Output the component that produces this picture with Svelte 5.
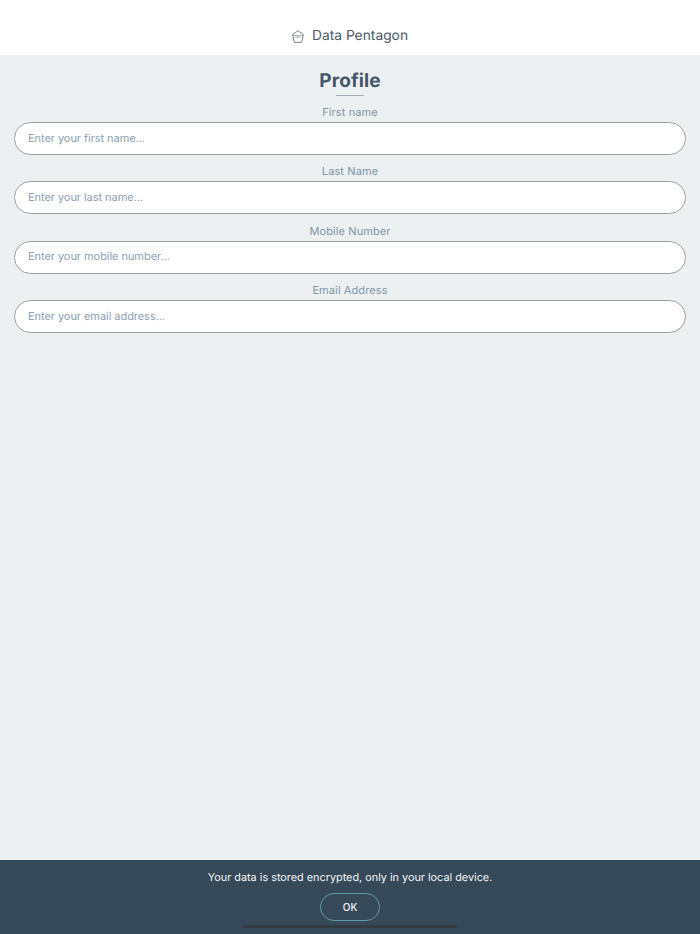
<script lang="ts">
  const fields = [
    { label: "First name", placeholder: "Enter your first name..." },
    { label: "Last Name", placeholder: "Enter your last name..." },
    { label: "Mobile Number", placeholder: "Enter your mobile number..." },
    { label: "Email Address", placeholder: "Enter your email address..." },
  ];
</script>

<div class="page">
  <header class="top">
    <svg class="logo" width="12" height="13" viewBox="0 0 12 13" fill="#fff" stroke="#7d858b" stroke-width="1">
      <path d="M6 .7 L11.4 4.6 L9.6 12.4 L2.4 12.4 L.6 4.6 Z" />
      <path d="M1 5.6 H11" stroke-width="0.7" />
      <path d="M3.5 7.2 H8.5" stroke-width="1" stroke-dasharray="1 0.5" />
    </svg>
    <span class="brand">Data Pentagon</span>
  </header>

  <main class="content">
    <h1>Profile</h1>
    <div class="rule"></div>
    <form class="form">
      {#each fields as f (f.label)}
        <label class="field">
          <span class="label">{f.label}</span>
          <input type="text" placeholder={f.placeholder} />
        </label>
      {/each}
    </form>
  </main>

  <footer class="notice">
    <p>Your data is stored encrypted, only in your local device.</p>
    <button type="button" class="ok">OK</button>
    <div class="home-bar"></div>
  </footer>
</div>

<style>
  :global(body) {
    margin: 0;
    font-family: Inter, "Liberation Sans", sans-serif;
    text-rendering: geometricPrecision;
  }

  .page {
    width: 700px;
    height: 934px;
    display: flex;
    flex-direction: column;
    background: #ecf0f1;
    overflow: hidden;
  }

  .top {
    height: 55px;
    flex: none;
    box-sizing: border-box;
    padding-top: 17px;
    background: #fff;
    display: flex;
    align-items: center;
    justify-content: center;
    gap: 8px;
  }

  .logo {
    display: block;
  }

  .brand {
    font-size: 13.8px;
    color: #4a5a68;
  }

  .content {
    flex: 1;
    display: flex;
    flex-direction: column;
    align-items: center;
    padding: 0 14px;
  }

  h1 {
    margin: 13px 0 0;
    font-size: 19px;
    line-height: 25px;
    font-weight: 700;
    letter-spacing: 0.1px;
    color: #44586a;
  }

  .rule {
    width: 28px;
    height: 1px;
    margin-top: 2px;
    background: #a3adb5;
  }

  .form {
    align-self: stretch;
    display: flex;
    flex-direction: column;
    gap: 9.4px;
    margin-top: 9px;
  }

  .field {
    display: flex;
    flex-direction: column;
    align-items: center;
    gap: 2px;
  }

  .label {
    font-size: 11px;
    line-height: 15px;
    letter-spacing: 0.1px;
    color: #7e95a8;
  }

  input {
    width: 100%;
    height: 33px;
    box-sizing: border-box;
    padding: 0 13px 2px;
    border: 1px solid #9a9fa3;
    border-radius: 17px;
    background: #fff;
    outline: none;
    font-family: inherit;
    font-size: 11px;
    letter-spacing: -0.05px;
    text-rendering: geometricPrecision;
  }

  input::placeholder {
    color: #8ba0b2;
    opacity: 1;
  }

  .notice {
    height: 74px;
    flex: none;
    box-sizing: border-box;
    padding-top: 10px;
    background: #364959;
    display: flex;
    flex-direction: column;
    align-items: center;
    position: relative;
  }

  .notice p {
    margin: 0;
    font-size: 10.85px;
    line-height: 15px;
    color: #f2f4f5;
  }

  .ok {
    width: 60px;
    height: 28px;
    margin-top: 8px;
    border: 1px solid #5f9aa6;
    border-radius: 14px;
    background: transparent;
    color: #f2f4f5;
    font-family: inherit;
    font-size: 10px;
    font-weight: 500;
  }

  .home-bar {
    position: absolute;
    left: 243px;
    bottom: 6px;
    width: 214px;
    height: 3px;
    background: #333b41;
    border-radius: 2px;
  }
</style>
